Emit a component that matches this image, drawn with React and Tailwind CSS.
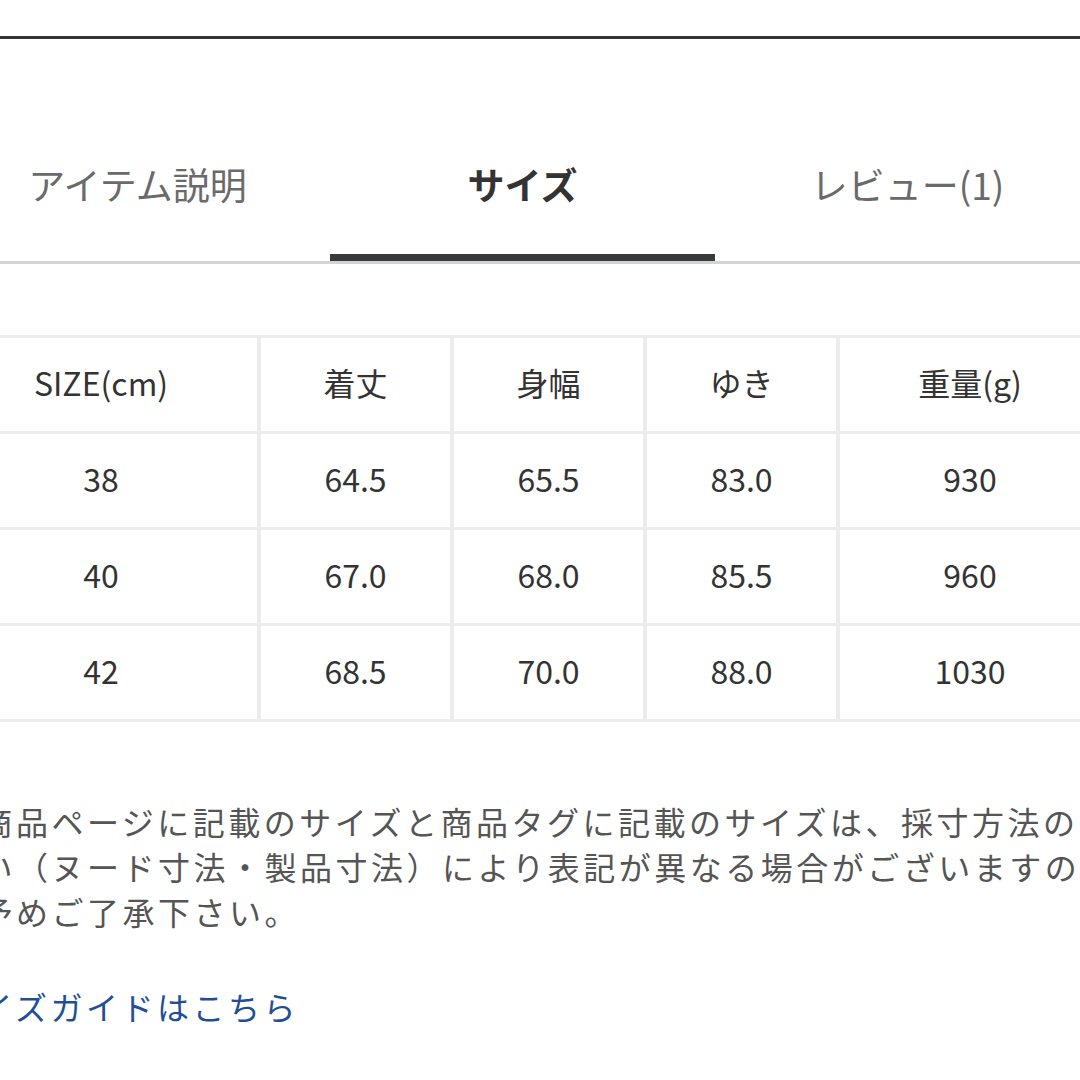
import React from 'react';

const tabs = [
  { label: 'アイテム説明', active: false },
  { label: 'サイズ', active: true },
  { label: 'レビュー(1)', active: false },
];

const head = ['SIZE(cm)', '着丈', '身幅', 'ゆき', '重量(g)'];
const rows = [
  ['38', '64.5', '65.5', '83.0', '930'],
  ['40', '67.0', '68.0', '85.5', '960'],
  ['42', '68.5', '70.0', '88.0', '1030'],
];

const note = [
  '※商品ページに記載のサイズと商品タグに記載のサイズは、採寸方法の',
  '違い（ヌード寸法・製品寸法）により表記が異なる場合がございますの',
  'で予めご了承下さい。',
];

export default function App() {
  return (
    <div
      className="w-[1080px] h-[1080px] bg-white overflow-hidden"
      style={{ fontFamily: '"Noto Sans CJK JP", "Noto Sans", sans-serif' }}
    >
      <div className="mt-[36px] h-[3px] bg-[#353535]" />

      <div className="ml-[-55px] w-[1155px]">
        {/* tabs */}
        <div className="flex pt-[121px] border-b-[3px] border-[#d4d4d4]">
          {tabs.map((t) => (
            <div key={t.label} className="flex-1 flex flex-col items-center">
              <div
                className={
                  'h-[48px] leading-[48px] text-[37px] ' +
                  (t.active ? 'font-bold text-[#333]' : 'text-[#6a6a6a]')
                }
              >
                {t.label}
              </div>
              <div className={'mt-[46px] h-[7px] w-full ' + (t.active ? 'bg-[#383b3e]' : 'bg-transparent')} />
            </div>
          ))}
        </div>

        {/* size table */}
        <div className="mt-[71px] grid grid-cols-[312px_189px_189px_189px_1fr] gap-x-[4px] gap-y-[3px] py-[3px] bg-[#ececec]">
          {[head, ...rows].map((r, i) =>
            r.map((c, j) => (
              <div
                key={i + '-' + j}
                className="h-[93px] pb-[6px] bg-white flex items-center justify-center text-[32px] text-[#333]"
              >
                {c}
              </div>
            ))
          )}
        </div>

        {/* note */}
        <div className="mt-[77px] text-[32px] leading-[45px] tracking-[3.5px] text-[#555] whitespace-nowrap">
          {note.map((l) => (
            <div key={l}>{l}</div>
          ))}
        </div>

        <div className="mt-[50px] text-[32px] leading-[45px] tracking-[3.5px] text-[#1f4f96] whitespace-nowrap">
          サイズガイドはこちら
        </div>
      </div>
    </div>
  );
}
